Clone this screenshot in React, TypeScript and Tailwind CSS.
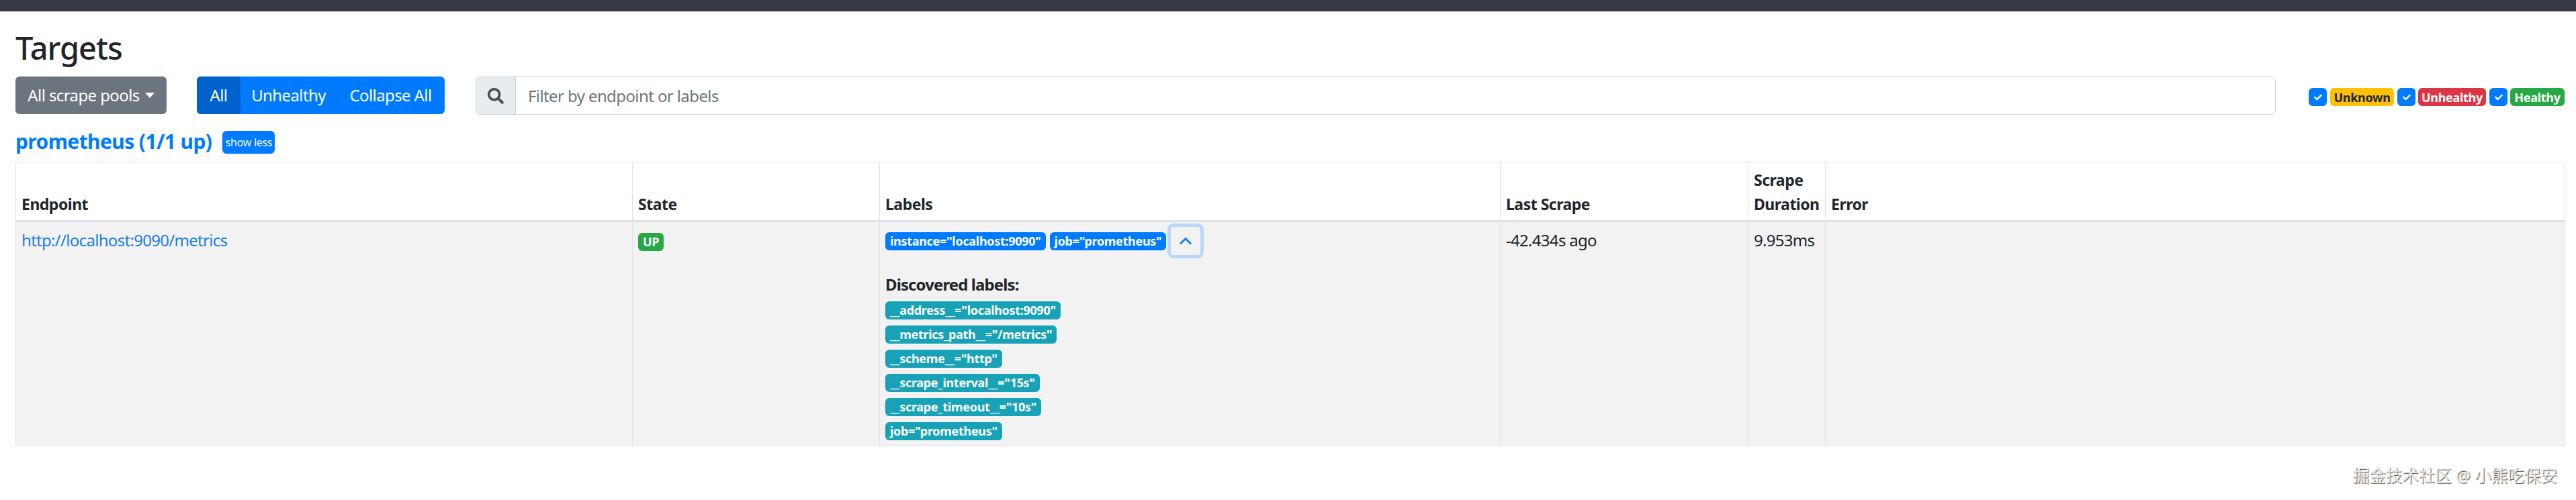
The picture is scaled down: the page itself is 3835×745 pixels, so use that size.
import React from "react";
import { FaSearch, FaCheck } from "react-icons/fa";

const font = "font-['Noto_Sans','Noto_Sans_CJK_SC',sans-serif]";

function Badge({ className, children }: { className: string; children: React.ReactNode }) {
  return (
    <span className={`inline-flex h-[27px] shrink-0 items-center whitespace-nowrap rounded-[6px] px-[7px] text-[18px] font-bold leading-none tracking-[-0.3px] ${className}`}>
      {children}
    </span>
  );
}

function Check() {
  return (
    <span className="flex h-[27px] w-[27px] shrink-0 items-center justify-center rounded-[6px] bg-[#007bff] text-white">
      <FaCheck className="h-[12px] w-[12px]" />
    </span>
  );
}

const discovered = [
  '__address__="localhost:9090"',
  '__metrics_path__="/metrics"',
  '__scheme__="http"',
  '__scrape_interval__="15s"',
  '__scrape_timeout__="10s"',
  'job="prometheus"',
];

const th = "border border-[#dee2e6] border-b-[3px] px-[8px] pb-[6px] pt-[8px] text-left align-bottom text-[23px] font-bold leading-[36px] tracking-[-0.5px] text-[#212529]";
const td = "border border-[#dee2e6] px-[8px] pt-[9px] align-top text-[24px] leading-[36px] tracking-[-0.7px] text-[#212529]";

export default function App() {
  return (
    <div className={`min-h-[745px] bg-white text-[#212529] ${font}`}>
      <div className="h-[17px] bg-[#373a42]" />
      <div className="px-[23px]">
        <h1 className="mt-[18px] text-[47px] font-medium leading-[72px] tracking-[-1px]">Targets</h1>
        <div className="mt-[7px] flex h-[57px] items-start">
          <button className="flex h-[56px] w-[225px] shrink-0 items-center justify-center gap-[8px] rounded-[6px] bg-[#6c757d] text-[24px] tracking-[-0.6px] text-white">
            All scrape pools
            <span className="h-0 w-0 border-x-[7px] border-t-[8px] border-x-transparent border-t-white" />
          </button>
          <div className="ml-[45px] flex h-[56px] shrink-0 overflow-hidden rounded-[6px] bg-[#007bff] text-[24px] tracking-[-0.6px] text-white">
            <button className="w-[65px] bg-[#0062cc]">All</button>
            <button className="w-[143px]">Unhealthy</button>
            <button className="w-[161px]">Collapse All</button>
          </div>
          <div className="ml-[46px] flex h-[57px] w-[2680px] shrink-0 overflow-hidden rounded-[6px] border border-[#ced4da]">
            <span className="flex w-[59px] items-center justify-center border-r border-[#ced4da] bg-[#e9ecef] text-[#495057]">
              <FaSearch className="h-[24px] w-[24px]" />
            </span>
            <span className="flex flex-1 items-center pl-[18px] text-[24px] tracking-[-0.6px] text-[#6c757d]">Filter by endpoint or labels</span>
          </div>
          <div className="ml-[49px] mt-[17px] flex items-center">
            <Check />
            <Badge className="ml-[5px] w-[95px] justify-center bg-[#ffc107] text-[#212529]">Unknown</Badge>
            <span className="ml-[5px]"><Check /></span>
            <Badge className="ml-[4px] w-[101px] justify-center bg-[#dc3545] text-white">Unhealthy</Badge>
            <span className="ml-[5px]"><Check /></span>
            <Badge className="ml-[4px] w-[81px] justify-center bg-[#28a745] text-white">Healthy</Badge>
          </div>
        </div>
        <div className="mt-[24px] flex h-[34px] items-center">
          <span className="pb-[3px] text-[30px] font-bold leading-[34px] tracking-[-0.6px] text-[#007bff]">prometheus (1/1 up)</span>
          <button className="ml-[16px] flex h-[34px] w-[78px] items-center justify-center rounded-[6px] bg-[#007bff] text-[16px] tracking-[-0.3px] text-white">show less</button>
        </div>
        <table className="mt-[12px] w-[3795px] table-fixed border-collapse">
          <colgroup>
            <col className="w-[918px]" />
            <col className="w-[368px]" />
            <col className="w-[924px]" />
            <col className="w-[369px]" />
            <col className="w-[115px]" />
            <col className="w-[1101px]" />
          </colgroup>
          <thead>
            <tr>
              <th className={th}>Endpoint</th>
              <th className={th}>State</th>
              <th className={th}>Labels</th>
              <th className={th}>Last Scrape</th>
              <th className={th}>Scrape Duration</th>
              <th className={th}>Error</th>
            </tr>
          </thead>
          <tbody>
            <tr className="bg-[#f2f2f2]">
              <td className={td}><span className="text-[#1a7fe8]">http://localhost:9090/metrics</span></td>
              <td className={td}><Badge className="mt-[5px] bg-[#28a745] text-white">UP</Badge></td>
              <td className="border border-[#dee2e6] px-[8px] pb-[4px] pt-[2px] align-top text-[24px] leading-[36px]">
                <div className="flex h-[52px] items-center gap-[6px]">
                  <Badge className="bg-[#007bff] text-white">instance="localhost:9090"</Badge>
                  <Badge className="bg-[#007bff] text-white">job="prometheus"</Badge>
                  <span className="-ml-[4px] flex h-[52px] w-[54px] items-center justify-center rounded-[9px] border-[5px] border-[#b8d7fb] text-[#1a7fe8]">
                    <svg width="20" height="12" viewBox="0 0 20 12" fill="none" stroke="currentColor" strokeWidth="3">
                      <path d="M2 10.5 L10 2.5 L18 10.5" />
                    </svg>
                  </span>
                </div>
                <div className="mt-[21px] font-bold tracking-[-0.9px]">Discovered labels:</div>
                <div className="mt-[2px] flex flex-col">
                  {discovered.map((d) => (
                    <div key={d} className="flex h-[36px] items-center">
                      <Badge className="bg-[#17a2b8] text-white">{d}</Badge>
                    </div>
                  ))}
                </div>
              </td>
              <td className={td}>-42.434s ago</td>
              <td className={td}>9.953ms</td>
              <td className={td} />
            </tr>
          </tbody>
        </table>
        <div className="mt-[29px] flex justify-end pr-[5px]">
          <span className="text-[24.5px] leading-[30px] text-[#e8e8e8] [text-shadow:1px_1px_1px_#555]">掘金技术社区 @ 小熊吃保安</span>
        </div>
      </div>
    </div>
  );
}
